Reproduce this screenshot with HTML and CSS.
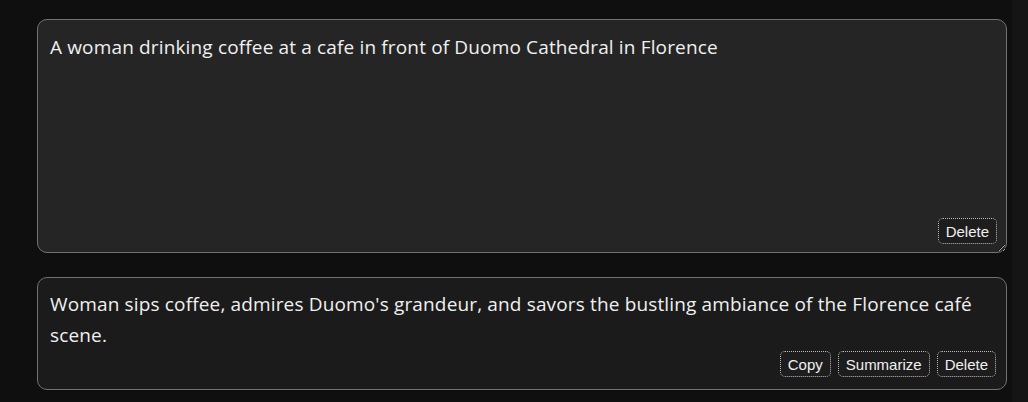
FILE: index.html
```html
<!DOCTYPE html>
<html lang="en">
<head>
    <meta charset="UTF-8">
    <meta name="viewport" content="width=device-width, initial-scale=1.0">
    <title>Prompt</title>
    <link rel="stylesheet" href="styles.css">
</head>
<body>
    <div class="page">
        <div class="prompt-box">
            <textarea class="prompt" id="prompt">A woman drinking coffee at a cafe in front of Duomo Cathedral in Florence</textarea>
            <button type="button" class="btn prompt-delete">Delete</button>
        </div>
        <div class="result">
            <p class="result-text">Woman sips coffee, admires Duomo's grandeur, and savors the bustling ambiance of the Florence café scene.</p>
            <div class="actions">
                <button type="button" class="btn">Copy</button>
                <button type="button" class="btn">Summarize</button>
                <button type="button" class="btn">Delete</button>
            </div>
        </div>
    </div>
</body>
</html>
```

FILE: styles.css
```css
html, body {
    margin: 0;
    height: 100%;
}
body {
    background-color: #151515;
    font-family: "Open Sans", "Noto Sans", sans-serif;
    color: #ececec;
}
.page {
    width: 1012px;
    height: 100%;
    box-sizing: border-box;
    background-color: #0f0f0f;
    padding: 19px 0 0 37px;
    display: flex;
    flex-direction: column;
    gap: 24px;
}
.prompt-box {
    position: relative;
    width: 970px;
    height: 234px;
}
.prompt {
    display: block;
    width: 100%;
    height: 100%;
    box-sizing: border-box;
    margin: 0;
    padding: 12px 12px;
    background-color: #252525;
    color: #f0f0f0;
    border: 1px solid #727272;
    border-radius: 10px;
    font-family: inherit;
    font-size: 19px;
    letter-spacing: 0.15px;
    line-height: 30px;
    resize: vertical;
    outline: none;
    color-scheme: dark;
}
.prompt-delete {
    position: absolute;
    right: 10px;
    bottom: 9px;
}
.result {
    width: 970px;
    box-sizing: border-box;
    padding: 11px 10px 12px 12px;
    background-color: #1b1b1b;
    border: 1px solid #727272;
    border-radius: 10px;
}
.result-text {
    margin: 0;
    font-size: 19px;
    letter-spacing: 0.15px;
    line-height: 31px;
    color: #f0f0f0;
}
.actions {
    display: flex;
    justify-content: flex-end;
    gap: 7px;
}
.btn {
    height: 26px;
    padding: 0 7px;
    font-family: "Liberation Sans", Arial, sans-serif;
    font-size: 15px;
    color: #f0f0f0;
    background-color: #1d1d1d;
    border: 1px dotted #bdbdbd;
    border-radius: 5px;
    cursor: pointer;
}
.btn:hover {
    background-color: #2a2a2a;
}
```
